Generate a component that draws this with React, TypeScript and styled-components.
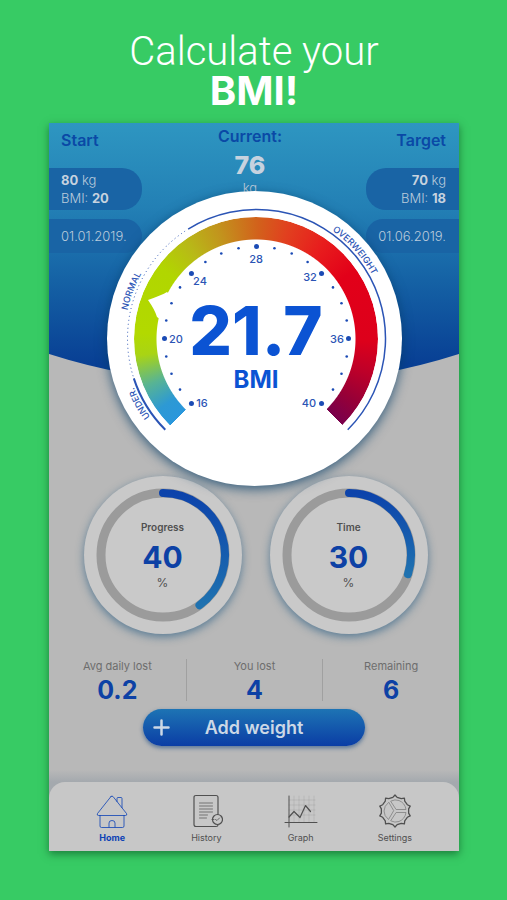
import React from 'react';
import styled, { createGlobalStyle } from 'styled-components';

const GlobalStyle = createGlobalStyle`
  * { box-sizing: border-box; }
  body {
    margin: 0;
    background: #37cb64;
    font-family: Inter, "Liberation Sans", sans-serif;
  }
  h1, h2, p, dl, dd, dt { margin: 0; }
`;

const Page = styled.main`
  min-height: 100vh;
  padding: 32px 48px 48px 49px;
  background: #37cb64;
`;

const Headline = styled.h1`
  color: #fff;
  font-family: Roboto, Inter, sans-serif;
  font-size: 40px;
  line-height: 39px;
  font-weight: 350;
  text-align: center;
  margin-bottom: 13px;

  strong {
    display: block;
    font-family: Inter, sans-serif;
    font-weight: 700;
  }
`;

const Phone = styled.div`
  background: #b8b8b8;
  box-shadow: 0 3px 8px rgba(0, 50, 20, 0.5);
`;

const Hero = styled.section`
  display: grid;
  position: relative;
  z-index: 1;

  > * { grid-area: 1 / 1; }
`;

const Sky = styled.div`
  z-index: 0;
  height: 262px;
  background: linear-gradient(#2e96c1 0%, #2380b5 32%, #1562a5 60%, #083f94 92%);
  clip-path: ellipse(106% 100% at 50% 0);
`;

const Summary = styled.div`
  z-index: 1;
  display: grid;
  grid-template-columns: 1fr auto 1fr;
  align-items: start;
`;

const Side = styled.div<{ $end?: boolean }>`
  display: flex;
  flex-direction: column;
  align-items: ${(p) => (p.$end ? 'flex-end' : 'flex-start')};
  text-align: ${(p) => (p.$end ? 'right' : 'left')};
  padding-top: 7px;
`;

const Caption = styled.h2`
  padding: 0 13px 0 12px;
  margin-bottom: 18px;
  color: #0a49a6;
  font-size: 16px;
  line-height: 20px;
  font-weight: 600;
`;

const Pill = styled.div<{ $end?: boolean }>`
  width: 93px;
  padding: 3px 13px 3px 12px;
  margin-bottom: 9px;
  border-radius: ${(p) => (p.$end ? '20px 0 0 20px' : '0 20px 20px 0')};
  background: #1964a5;
  color: #b9cbdc;
  font-size: 13px;
  line-height: 18px;
  font-weight: 300;
  white-space: nowrap;

  strong { font-weight: 700; color: #c6d2df; }
`;

const DatePill = styled(Pill)`
  padding: 8px 13px 8px 12px;
`;

const Current = styled.div`
  padding: 3px 8px 0 0;
  text-align: center;
  color: #c6d2df;
`;

const CurrentTitle = styled.h2`
  color: #0a49a6;
  font-size: 16px;
  line-height: 20px;
  font-weight: 600;
`;

const CurrentValue = styled.p`
  margin-top: 5px;
  font-size: 25px;
  line-height: 28px;
  font-weight: 800;
`;

const CurrentUnit = styled.p`
  margin-top: 1px;
  font-size: 13px;
  line-height: 16px;
  font-weight: 300;
`;

const Dial = styled.div`
  z-index: 2;
  display: grid;
  justify-self: center;
  width: 295px;
  height: 295px;
  margin-top: 68px;
  border-radius: 50%;
  background: #fff;
  box-shadow: 0 3px 12px rgba(6, 62, 104, 0.75);

  > * { grid-area: 1 / 1; }
`;

const Band = styled.div`
  place-self: center;
  width: 244px;
  height: 244px;
  margin-left: 4px;
  border-radius: 50%;
  background: conic-gradient(
    from 225deg,
    #2a97dc 0deg, #2d99d4 9deg, #58b493 22deg, #a9d414 37deg, #b2d900 48deg,
    #b1d600 82deg, #b8b917 99deg, #c2941d 116deg, #d2611b 136deg,
    #e1401f 151deg, #e81d1d 170deg, #e20019 190deg, #dd001b 226deg,
    #bd0029 242deg, #970037 257deg, #79014c 270deg, transparent 270deg
  );
  mask-image: radial-gradient(circle, transparent 99px, #000 100px);
`;

const Drawing = styled.svg`
  z-index: 1;
  display: block;
  width: 100%;
  height: 100%;
  font-family: Inter, "Liberation Sans", sans-serif;
`;

const Rings = styled.section`
  display: flex;
  justify-content: center;
  gap: 28px;
  margin-top: -10px;
  padding-left: 3px;
`;

const RingFace = styled.div`
  display: grid;
  width: 158px;
  height: 158px;
  border-radius: 50%;
  background: #c9c9c9;
  box-shadow: 0 3px 8px rgba(40, 92, 130, 0.65);

  > * { grid-area: 1 / 1; }
`;

const RingText = styled.div`
  place-self: center;
  text-align: center;
  color: #505050;
`;

const RingLabel = styled.p`
  font-size: 10px;
  line-height: 14px;
  font-weight: 600;
`;

const RingValue = styled.p`
  margin: 6px 0 2px;
  color: #0d41a5;
  font-size: 30px;
  line-height: 34px;
  font-weight: 700;
`;

const RingUnit = styled.p`
  font-size: 12px;
  line-height: 14px;
`;

const Stats = styled.dl`
  display: grid;
  grid-template-columns: repeat(3, 1fr);
  padding-top: 25px;
`;

const Stat = styled.div`
  height: 42px;
  text-align: center;

  & + & { border-left: 1px solid #a0a0a0; }
`;

const StatLabel = styled.dt`
  color: #6d6d6d;
  font-size: 11px;
  line-height: 14px;
  font-weight: 400;
`;

const StatValue = styled.dd`
  color: #0d41a5;
  font-size: 25px;
  line-height: 34px;
  font-weight: 700;
`;

const AddButton = styled.button`
  display: grid;
  grid-template-columns: 18px 1fr 18px;
  align-items: center;
  width: 222px;
  height: 37px;
  margin: 8px auto 24px;
  padding: 0 10px;
  border: 0;
  border-radius: 19px;
  background: linear-gradient(#1d74b4, #0b3da5);
  box-shadow: 0 2px 4px rgba(20, 70, 130, 0.6);
  color: #ccd8e6;
  font: 600 18px/22px Inter, "Liberation Sans", sans-serif;
  cursor: pointer;
`;

const Footer = styled.div`
  padding-top: 12px;
  background: linear-gradient(#b8b8b8, #a4a9ae 12px);
`;

const Tabs = styled.nav`
  display: grid;
  grid-template-columns: repeat(4, 1fr);
  padding: 12px 17px 6px 16px;
  border-radius: 16px 16px 0 0;
  background: #c7c7c7;
`;

const Tab = styled.a<{ $active?: boolean }>`
  display: flex;
  flex-direction: column;
  align-items: center;
  gap: 3px;
  color: ${(p) => (p.$active ? '#0d41b5' : '#505050')};
  font-size: 9px;
  line-height: 14px;
  font-weight: ${(p) => (p.$active ? 700 : 400)};
  text-decoration: none;
`;

const TabIcon = styled.svg`
  width: 34px;
  height: 34px;
  fill: none;
  stroke: currentColor;
  stroke-linecap: round;
  stroke-linejoin: round;
`;

const point = (r: number, deg: number, c = 147.5): [number, number] => {
  const a = (deg * Math.PI) / 180;
  return [c + r * Math.sin(a), c - r * Math.cos(a)];
};

const arc = (r: number, from: number, to: number, c = 147.5) => {
  const [x1, y1] = point(r, from, c);
  const [x2, y2] = point(r, to, c);
  return `M${x1} ${y1}A${r} ${r} 0 ${to - from > 180 ? 1 : 0} 1 ${x2} ${y2}`;
};

const BLUE = '#0b53d3';
const LINE = '#2b54b5';

const marks = Array.from({ length: 25 }, (_, i) => ({
  value: 16 + i,
  angle: -135 + i * 11.25,
}));

const scale = [
  { text: '16', x: 93, y: 216 },
  { text: '20', x: 67, y: 152 },
  { text: '24', x: 91, y: 94 },
  { text: '28', x: 147, y: 72 },
  { text: '32', x: 201, y: 90 },
  { text: '36', x: 228, y: 152 },
  { text: '40', x: 200, y: 216 },
];

function BmiDial() {
  return (
    <Dial>
      <Band />
      <Drawing viewBox="-2 0 295 295" role="img" aria-label="BMI 21.7">
        <defs>
          <path id="zone-under" d={arc(132, -135, -95)} />
          <path id="zone-normal" d={arc(132, -90, -50)} />
          <path id="zone-over" d={arc(132, 20, 80)} />
        </defs>
        <path
          d="M39 109Q53 104 58 101L70 112L62 136L48 126Q46 119 39 109Z"
          fill="#fff"
        />
        <g fill="none" stroke={LINE}>
          <path d={arc(129, -135, -108)} strokeWidth="2" />
          <path d={arc(129, -107, -33)} strokeWidth="1" strokeDasharray="1 3" />
          <path d={arc(129, -32, 135)} strokeWidth="1.5" />
        </g>
        {marks.map(({ value, angle }) => {
          const [x, y] = point(92, angle);
          return (
            <circle key={value} cx={x} cy={y} r={value % 4 === 0 ? 2.5 : 1.3} fill="#1b4bb5" />
          );
        })}
        <g fontSize="11" fontWeight="500" fill={LINE} textAnchor="middle">
          {scale.map((s) => (
            <text key={s.text} x={s.x} y={s.y}>{s.text}</text>
          ))}
        </g>
        <g fontSize="9" fontWeight="500" fill={LINE} textAnchor="middle">
          <text><textPath href="#zone-under" startOffset="40%">UNDER.</textPath></text>
          <text><textPath href="#zone-normal" startOffset="52%">NORMAL</textPath></text>
          <text><textPath href="#zone-over" startOffset="47%">OVERWEIGHT</textPath></text>
        </g>
        <text x="147" y="164" fontSize="67" fontWeight="800" fill={BLUE} textAnchor="middle">
          21.7
        </text>
        <text x="147" y="197" fontSize="24" fontWeight="700" fill={BLUE} textAnchor="middle">
          BMI
        </text>
      </Drawing>
    </Dial>
  );
}

function Ring({ label, value }: { label: string; value: number }) {
  const id = `ring-${label}`;
  return (
    <RingFace>
      <Drawing viewBox="0 0 158 158" aria-hidden="true">
        <defs>
          <linearGradient id={id} x1="0" y1="0" x2="0" y2="1">
            <stop offset="0" stopColor="#0c43ab" />
            <stop offset="1" stopColor="#1f72b0" />
          </linearGradient>
        </defs>
        <circle cx="79" cy="79" r="62" fill="none" stroke="#9b9b9b" strokeWidth="9" />
        <path
          d={arc(62, 0, value * 3.6, 79)}
          fill="none"
          stroke={`url(#${id})`}
          strokeWidth="8"
          strokeLinecap="round"
        />
      </Drawing>
      <RingText>
        <RingLabel>{label}</RingLabel>
        <RingValue>{value}</RingValue>
        <RingUnit>%</RingUnit>
      </RingText>
    </RingFace>
  );
}

const HomeIcon = () => (
  <TabIcon viewBox="0 0 34 34" aria-hidden="true" strokeWidth=".8">
    <path d="M16 2.500 2.500 19.500q-1 2 1 2h27q2 0 1-2L18 2.500q-1-1-2 0Z" />
    <path d="M5 21.500V32q0 1.500 1.500 1.500h21Q29 33.500 29 32V21.500" />
    <path d="M14 33v-4q0-2.500 3-2.500t3 2.500v4" />
    <path d="M22 7.500V4.500q0-1 1-1h3q1 0 1 1v9" />
  </TabIcon>
);

const HistoryIcon = () => (
  <TabIcon viewBox="0 0 34 34" aria-hidden="true" strokeWidth="1.2">
    <path d="M24 32.500H7q-2 0-2-2V3.500q0-2 2-2h20q2 0 2 2v17M29 31q0 1.500-2 1.500h-3" />
    <path d="M10.500 9h13M10.500 12h13M10.500 15h13M10.500 18h13M10.500 21h8M10.500 24h7" strokeWidth=".7" />
    <circle cx="28.500" cy="25.500" r="5" fill="#c7c7c7" />
    <path d="m26.500 25.500 1.500 1 2.500-2.500M23 25.500h2" strokeWidth=".8" />
  </TabIcon>
);

const GraphIcon = () => (
  <TabIcon viewBox="0 0 34 34" aria-hidden="true" strokeWidth="1.2">
    <path
      d="M5 6h26M5 11h26M5 16h26M5 21h26M10 2v26M15 2v26M20 2v26M25 2v26M30 2v26"
      strokeWidth=".5"
      opacity=".25"
      strokeDasharray="2 1"
    />
    <path d="M5 2v31M1 28.500h32" strokeWidth="1" />
    <path d="m5 23 5-5.500 6 6 5.500-12 5 6" />
  </TabIcon>
);

const gear = Array.from({ length: 10 }, (_, i) => {
  const [x, y] = point(16, i * 36, 17);
  const [ax, ay] = point(13.8, i * 36 + 9, 17);
  const [bx, by] = point(13.8, i * 36 + 27, 17);
  return `${i ? 'L' : 'M'}${x} ${y}L${ax} ${ay}L${bx} ${by}`;
}).join('') + 'Z';

const SettingsIcon = () => (
  <TabIcon viewBox="0 0 34 34" aria-hidden="true" strokeWidth="1.3">
    <path d={gear} />
    <g strokeWidth=".8" opacity=".6">
      <path d="M13 7Q17 5 21 6.500 27 9 28 15.500H18.500Z" />
      <path d="M13 27Q17 29 21 27.500 27 25 28 18.500H18.500Z" />
      <path d="M10.500 8.500Q6 12 6 17t4.500 8.500L15.500 17Z" />
    </g>
  </TabIcon>
);

const tabs = [
  { name: 'Home', Icon: HomeIcon },
  { name: 'History', Icon: HistoryIcon },
  { name: 'Graph', Icon: GraphIcon },
  { name: 'Settings', Icon: SettingsIcon },
];

const stats = [
  { label: 'Avg daily lost', value: '0.2' },
  { label: 'You lost', value: '4' },
  { label: 'Remaining', value: '6' },
];

export default function App() {
  return (
    <Page>
      <GlobalStyle />
      <Headline>
        Calculate your <strong>BMI!</strong>
      </Headline>
      <Phone>
        <Hero>
          <Sky />
          <Summary>
            <Side>
              <Caption>Start</Caption>
              <Pill>
                <strong>80</strong> kg
                <br />
                BMI: <strong>20</strong>
              </Pill>
              <DatePill>01.01.2019.</DatePill>
            </Side>
            <Current>
              <CurrentTitle>Current:</CurrentTitle>
              <CurrentValue>76</CurrentValue>
              <CurrentUnit>kg</CurrentUnit>
            </Current>
            <Side $end>
              <Caption>Target</Caption>
              <Pill $end>
                <strong>70</strong> kg
                <br />
                BMI: <strong>18</strong>
              </Pill>
              <DatePill $end>01.06.2019.</DatePill>
            </Side>
          </Summary>
          <BmiDial />
        </Hero>
        <Rings>
          <Ring label="Progress" value={40} />
          <Ring label="Time" value={30} />
        </Rings>
        <Stats>
          {stats.map((s) => (
            <Stat key={s.label}>
              <StatLabel>{s.label}</StatLabel>
              <StatValue>{s.value}</StatValue>
            </Stat>
          ))}
        </Stats>
        <AddButton type="button">
          <svg width="17" height="17" viewBox="0 0 17 17" aria-hidden="true">
            <path d="M8.500 1.500v14M1.500 8.500h14" stroke="currentColor" strokeWidth="2.500" strokeLinecap="round" />
          </svg>
          Add weight
        </AddButton>
        <Footer>
          <Tabs>
            {tabs.map(({ name, Icon }) => (
              <Tab key={name} href={`#${name.toLowerCase()}`} $active={name === 'Home'}>
                <Icon />
                {name}
              </Tab>
            ))}
          </Tabs>
        </Footer>
      </Phone>
    </Page>
  );
}
